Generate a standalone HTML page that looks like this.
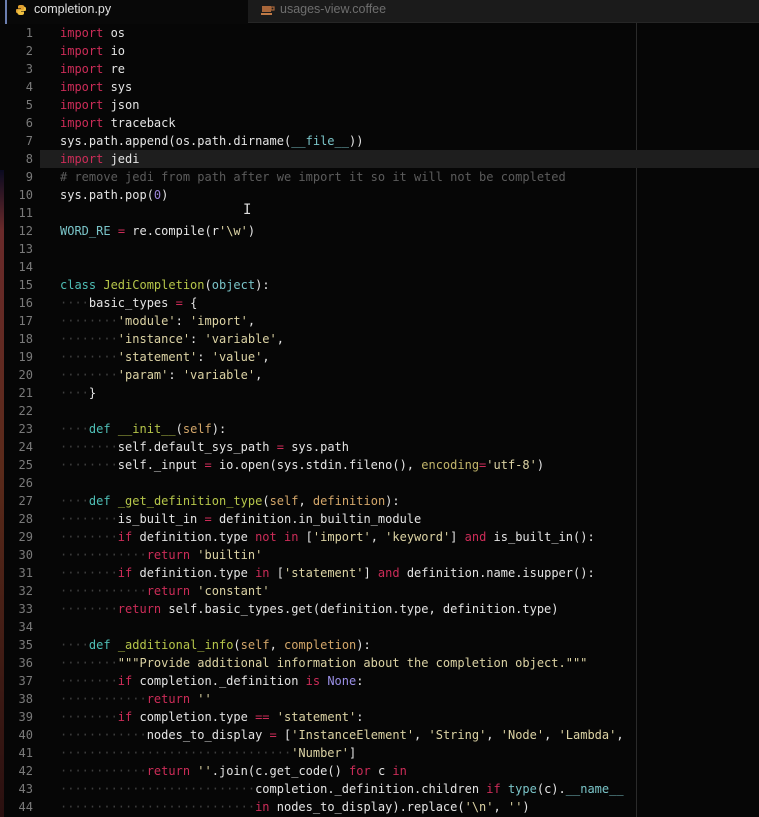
<!DOCTYPE html>
<html><head><meta charset="utf-8"><style>
html,body{margin:0;padding:0;background:#060606;width:759px;height:817px;overflow:hidden;}
.tabs{position:absolute;left:0;top:0;width:759px;height:22px;background:#060606;}
.tab1{position:absolute;left:0;top:0;width:248px;height:24px;background:#080808;}
.bar{position:absolute;left:5px;top:0;width:2px;height:24px;background:#6c7fb0;}
.tab1 span{position:absolute;left:34px;top:2px;font:12.5px "Liberation Sans",sans-serif;color:#e0e0e0;}
.tab2{position:absolute;left:248px;top:0;width:511px;height:22px;background:#1b1b1b;border-bottom:1px solid #262626;}
.tab2 span{position:absolute;left:32px;top:2px;font:12.5px "Liberation Sans",sans-serif;color:#6e6e6e;}
.ruler{position:absolute;left:636px;top:23px;width:1px;height:794px;background:#2a2a2a;}
.strip{position:absolute;left:0;top:170px;width:4px;height:647px;background:linear-gradient(#0a0a20,#6a2a2a 60px,#5a2a1a 300px,#2a1010);}
.hl{position:absolute;left:40px;top:150px;width:719px;height:18px;background:#1e1e1e;}
.gut{position:absolute;left:0;top:24px;width:33px;text-align:right;font:12px/18px "DejaVu Sans Mono",monospace;color:#7a7a7a;white-space:pre;}
.code{position:absolute;left:60px;top:24px;font:12px/18px "DejaVu Sans Mono",monospace;color:#e4e4e4;white-space:pre;}
.k{color:#cc2c58}.s{color:#dcd3a4}.c{color:#5c5c5c}.n{color:#9c86d8}.d{color:#4fbfb6}.f{color:#b6c64a}.p{color:#d4a76a}.b{color:#7ac4c8}.o{color:#9a8fe6}.w{color:#3e3e3e}.e{color:#c2b56a}
</style></head><body>
<div class="tabs"></div>
<div class="tab1"><div class="bar"></div>
<svg style="position:absolute;left:15px;top:4px" width="12" height="12" viewBox="0 0 12 12"><path d="M6 1C3 1 3 2 3 3v1.5h3V5H2C1 5 1 6 1 7s0 2 1.5 2H3V7.5C3 6.5 4 6 5 6h3c1 0 1.5-.5 1.5-1.5V3C9.5 2 9 1 6 1z" fill="#e0a030"/><path d="M6 11c3 0 3-1 3-2V7.5H6V7h4c1 0 1-1 1-2s0-2-1.5-2H9v1.5C9 5.5 8 6 7 6H4c-1 0-1.5.5-1.5 1.5V9c0 1 .5 2 3.5 2z" fill="#f0c040"/></svg>
<span>completion.py</span></div>
<div class="tab2"><svg style="position:absolute;left:13px;top:4px" width="14" height="12" viewBox="0 0 14 12"><rect x="1" y="2" width="9" height="6" fill="#a8663a"/><rect x="10" y="3" width="3" height="3" fill="none" stroke="#a8663a" stroke-width="1.2"/><rect x="0" y="9" width="11" height="2" fill="#c07a46"/></svg><span>usages-view.coffee</span></div>
<div class="ruler"></div>
<div class="strip"></div>
<div class="hl"></div>
<div class="gut">1
2
3
4
5
6
7
8
9
10
11
12
13
14
15
16
17
18
19
20
21
22
23
24
25
26
27
28
29
30
31
32
33
34
35
36
37
38
39
40
41
42
43
44</div>
<div class="code"><span class="k">import</span> os
<span class="k">import</span> io
<span class="k">import</span> re
<span class="k">import</span> sys
<span class="k">import</span> json
<span class="k">import</span> traceback
sys.path.append(os.path.dirname(<span class="b">__file__</span>))
<span class="k">import</span> jedi
<span class="c"># remove jedi from path after we import it so it will not be completed</span>
sys.path.pop(<span class="n">0</span>)

<span class="b">WORD_RE</span> <span class="k">=</span> re.compile(r<span class="s">'\w'</span>)


<span class="d">class</span> <span class="f">JediCompletion</span>(<span class="b">object</span>):
<span class="w">····</span>basic_types <span class="k">=</span> {
<span class="w">········</span><span class="s">'module'</span>: <span class="s">'import'</span>,
<span class="w">········</span><span class="s">'instance'</span>: <span class="s">'variable'</span>,
<span class="w">········</span><span class="s">'statement'</span>: <span class="s">'value'</span>,
<span class="w">········</span><span class="s">'param'</span>: <span class="s">'variable'</span>,
<span class="w">····</span>}

<span class="w">····</span><span class="d">def</span> <span class="f">__init__</span>(<span class="p">self</span>):
<span class="w">········</span>self.default_sys_path <span class="k">=</span> sys.path
<span class="w">········</span>self._input <span class="k">=</span> io.open(sys.stdin.fileno(), <span class="e">encoding</span><span class="k">=</span><span class="s">'utf-8'</span>)

<span class="w">····</span><span class="d">def</span> <span class="f">_get_definition_type</span>(<span class="p">self</span>, <span class="p">definition</span>):
<span class="w">········</span>is_built_in <span class="k">=</span> definition.in_builtin_module
<span class="w">········</span><span class="k">if</span> definition.type <span class="k">not in</span> [<span class="s">'import'</span>, <span class="s">'keyword'</span>] <span class="k">and</span> is_built_in():
<span class="w">············</span><span class="k">return</span> <span class="s">'builtin'</span>
<span class="w">········</span><span class="k">if</span> definition.type <span class="k">in</span> [<span class="s">'statement'</span>] <span class="k">and</span> definition.name.isupper():
<span class="w">············</span><span class="k">return</span> <span class="s">'constant'</span>
<span class="w">········</span><span class="k">return</span> self.basic_types.get(definition.type, definition.type)

<span class="w">····</span><span class="d">def</span> <span class="f">_additional_info</span>(<span class="p">self</span>, <span class="p">completion</span>):
<span class="w">········</span><span class="s">"""Provide additional information about the completion object."""</span>
<span class="w">········</span><span class="k">if</span> completion._definition <span class="k">is</span> <span class="o">None</span>:
<span class="w">············</span><span class="k">return</span> <span class="s">''</span>
<span class="w">········</span><span class="k">if</span> completion.type <span class="k">==</span> <span class="s">'statement'</span>:
<span class="w">············</span>nodes_to_display <span class="k">=</span> [<span class="s">'InstanceElement'</span>, <span class="s">'String'</span>, <span class="s">'Node'</span>, <span class="s">'Lambda'</span>,
<span class="w">································</span><span class="s">'Number'</span>]
<span class="w">············</span><span class="k">return</span> <span class="s">''</span>.join(c.get_code() <span class="k">for</span> c <span class="k">in</span>
<span class="w">···························</span>completion._definition.children <span class="k">if</span> <span class="b">type</span>(c).<span class="b">__name__</span>
<span class="w">···························</span><span class="k">in</span> nodes_to_display).replace(<span class="s">'\n'</span>, <span class="s">''</span>)</div>
<div style="position:absolute;left:243px;top:202px;font:14px monospace;color:#ddd">I</div>
</body></html>
